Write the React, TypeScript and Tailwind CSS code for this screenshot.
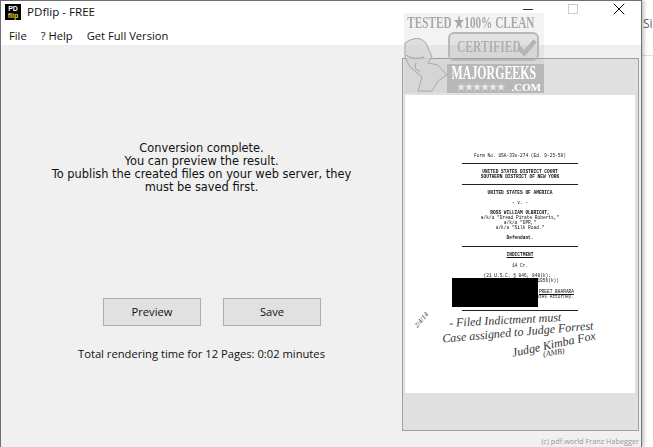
import { X } from 'lucide-react'

const ui = "font-['Open_Sans','Noto_Sans',sans-serif]"

function AppIcon() {
  return (
    <div className="w-4 h-4 bg-black flex flex-col items-center justify-center font-['Liberation_Sans',sans-serif] font-bold text-[7px] leading-[7px]">
      <span className="text-white">PD</span>
      <span className="text-[#e8d020]">flip</span>
    </div>
  )
}

// scanned page, blurred a bit like the thumbnail
function DocPage() {
  return (
    <div className="relative w-[230px] h-[298px] bg-white overflow-hidden">
      <div className="flex flex-col items-center pt-[58px] font-['Liberation_Mono',monospace] text-[4.5px] leading-[5px] text-[#111] blur-[0.3px] whitespace-nowrap">
        <p>Form No. USA-33s-274 (Ed. 9-25-58)</p>
        <div className="w-[116px] h-px bg-[#222] mt-[5px]" />
        <p className="mt-[5px] font-bold">UNITED STATES DISTRICT COURT</p>
        <p className="font-bold">SOUTHERN DISTRICT OF NEW YORK</p>
        <div className="w-[116px] h-px bg-[#222] mt-[5px]" />
        <p className="mt-[5px] font-bold">UNITED STATES OF AMERICA</p>
        <p className="mt-[5px]">- v. -</p>
        <p className="mt-[5px] font-bold">ROSS WILLIAM ULBRICHT,</p>
        <p>a/k/a "Dread Pirate Roberts,"</p>
        <p>a/k/a "DPR,"</p>
        <p>a/k/a "Silk Road."</p>
        <p className="mt-[5px] font-bold">Defendant.</p>
        <div className="w-[116px] h-px bg-[#222] mt-[6px]" />
        <p className="mt-[5px] font-bold underline">INDICTMENT</p>
        <p className="mt-[6px]">14 Cr.</p>
        <p className="mt-[5px] self-end pr-[84px]">(21 U.S.C. § 846, 848(k);</p>
        <p className="self-end pr-[76px]">1956(k))</p>
        <p className="mt-[6px] self-end pr-[61px] underline">PREET BHARARA</p>
        <p className="self-end pr-[61px]">States Attorney.</p>
        <div className="w-[116px] h-px bg-[#222] mt-[11px]" />
      </div>
      {/* redaction */}
      <div className="absolute left-[47px] top-[183px] w-[86px] h-[29px] bg-black" />
      {/* handwriting */}
      <div className="absolute inset-0 font-['Liberation_Serif',serif] italic text-[#333] text-[12px] leading-none whitespace-nowrap">
        <span className="absolute left-[8px] top-[222px] text-[7px] -rotate-[50deg]">2/4/14</span>
        <span className="absolute left-[44px] top-[219px] -rotate-[3deg]">- Filed Indictment must</span>
        <span className="absolute left-[37px] top-[231px] -rotate-[5deg]">Case assigned to Judge Forrest</span>
        <span className="absolute left-[106px] top-[243px] -rotate-[12deg]">Judge Kimba Fox</span>
        <span className="absolute left-[138px] top-[254px] text-[8px] -rotate-[10deg]">(AMB)</span>
      </div>
    </div>
  )
}

function Watermark() {
  return (
    <div className="absolute z-20 left-[404px] top-[13px] w-[140px] h-[80px] bg-[#888]/10 font-['Liberation_Serif',serif] font-bold overflow-hidden">
      <p className="origin-left scale-x-[0.66] text-[17px] leading-[20px] whitespace-nowrap text-[#a8a8a8] pl-[5px]">TESTED ★100% CLEAN</p>
      {/* stamp */}
      <div className="absolute left-[44px] top-[19px] w-[91px] h-[29px] rounded-md bg-[#aaa]/25 border-2 border-[#b8b8b8] flex items-center pl-[7px]">
        <span className="origin-left scale-x-[0.68] text-[17px] leading-none text-[#b0b0b0] w-[60px]">CERTIFIED</span>
        <svg width="20" height="18" viewBox="0 0 22 20">
          <path d="M2 11l6 6L20 3" fill="none" stroke="#b5b5b5" strokeWidth="5" />
        </svg>
      </div>
      {/* mascot */}
      <svg width="46" height="58" viewBox="0 0 46 58" className="absolute left-0 top-[22px]">
        <path d="M1 8c8-6 16-6 21 0l6 14-4 6 10 2 9 10-9 6-6 10H14l4-14L6 32 1 22z" fill="#d4d4d4" fillOpacity="0.7" stroke="#a8a8a8" strokeWidth="1" />
        <path d="M2 20c6 4 12 4 18 2M16 36c-4 0-6-4-4-8" fill="none" stroke="#a0a0a0" strokeWidth="1" />
      </svg>
      {/* name band */}
      <div className="absolute left-[43px] top-[51px] w-[97px] h-[29px] bg-[#a4a4a4]/60 text-white">
        <p className="origin-left scale-x-[0.66] text-[18px] leading-[18px] whitespace-nowrap pl-[7px]">MAJORGEEKS</p>
        <div className="flex items-center justify-between pl-[10px] pr-[3px] text-[9px] leading-[10px] whitespace-nowrap">
          <span className="text-[#e8e8e8]">★★★★★★</span>
          <span className="text-[11px]">.COM</span>
        </div>
      </div>
    </div>
  )
}

export default function App() {
  return (
    <div className={`relative flex w-[653px] h-[447px] overflow-hidden bg-white text-[11.2px] text-[#111] ${ui}`}>
      {/* pdflip window */}
      <div className="relative flex flex-col w-[642px] shrink-0 border-t border-l border-r border-[#707070] shadow-[2px_0_4px_rgba(0,0,0,0.25)] z-10">
        <div className="h-[21px] flex items-center pl-1 gap-[6px] bg-white">
          <AppIcon />
          <span className="text-[11.6px]">PDflip - FREE</span>
          <div className="ml-auto flex items-center h-full">
            <div className="w-[10px] h-px bg-[#333] mr-[35px] mb-[5px]" />
            <div className="w-[10px] h-[10px] border border-[#ccc] mr-[31px] mb-[5px]" />
            <X size={20} strokeWidth={1.2} className="mr-[12px] mb-[5px] text-black" />
          </div>
        </div>
        <div className="h-[23px] flex items-center pl-2 pt-[5px] gap-[14px] bg-white">
          <span>File</span>
          <span>? Help</span>
          <span>Get Full Version</span>
        </div>
        <div className="flex-1 flex bg-[#f0f0f0]">
          <div className="w-[401px] flex flex-col items-center pt-[97px]">
            <p className="text-center font-['DejaVu_Sans',sans-serif] text-[11.4px] leading-[13px] w-[340px]">
              Conversion complete.
              <br />
              You can preview the result.
              <br />
              To publish the created files on your web server, they
              <br />
              must be saved first.
            </p>
            <div className="flex gap-[22px] mt-[104px] self-start ml-[102px]">
              <button className="w-[98px] h-[28px] bg-[#e1e1e1] border border-[#adadad]">Preview</button>
              <button className="w-[98px] h-[28px] bg-[#e1e1e1] border border-[#adadad]">Save</button>
            </div>
            <p className="mt-[20px]">Total rendering time for 12 Pages: 0:02 minutes</p>
          </div>
          <div className="flex flex-col pt-[13px]">
            <div className="w-[237px] h-[373px] bg-[#e0e0e0] border border-[#a0a0a0] pt-[36px] pl-[2px]">
              <DocPage />
            </div>
            <p className="mt-[4px] text-right text-[7.3px] leading-[12px] text-[#999] whitespace-nowrap">
              (c) pdf.world Franz Habegger
            </p>
          </div>
        </div>
      </div>

      {/* window behind */}
      <div className="flex-1 overflow-hidden">
        <div className="h-[56px] border-b border-[#e0e0e0] pt-[15px] pl-[1px] text-[12px] text-[#666] whitespace-nowrap">Size</div>
      </div>

      <Watermark />
    </div>
  )
}
